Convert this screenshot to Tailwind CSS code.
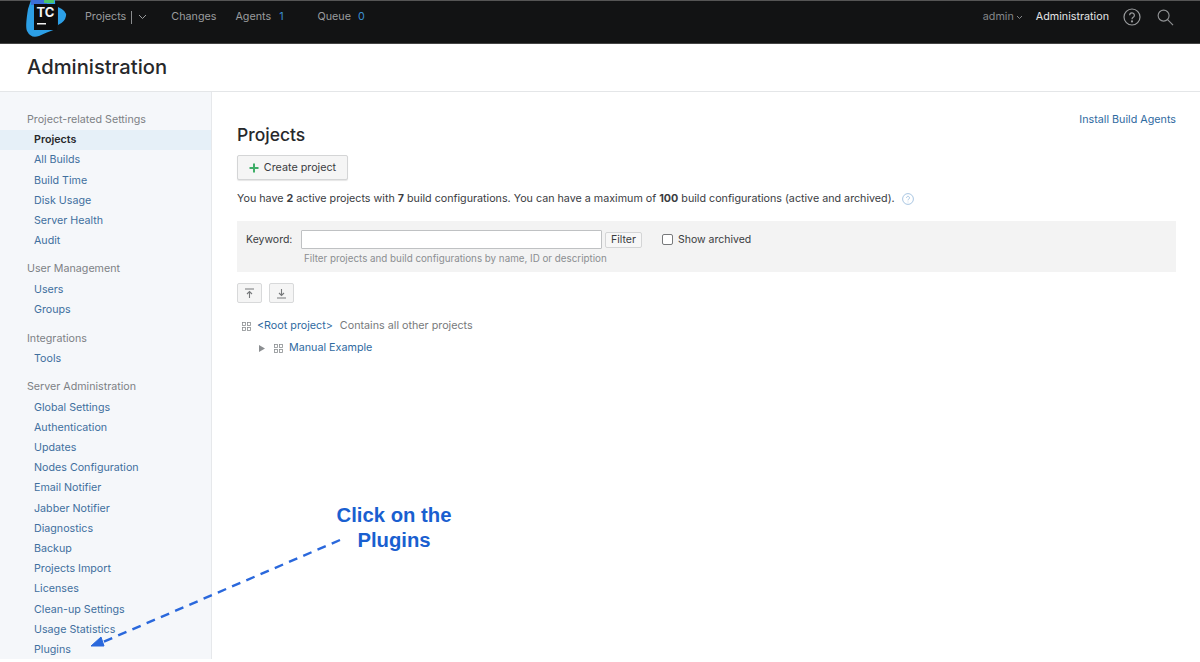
<!DOCTYPE html>
<html lang="en">
<head>
  <meta charset="UTF-8">
  <title>Administration</title>
  <script src="https://cdn.jsdelivr.net/npm/@tailwindcss/browser@4"></script>
</head>
<body class="relative w-[1200px] h-[662px] overflow-hidden bg-white font-['Inter',sans-serif] text-[10.75px] text-[#3a3c3f]">

  <!-- Top nav -->
  <header class="relative h-[44px] bg-[#121314] border-t border-t-[#555] border-b border-b-[#444] flex items-center pb-[10px] text-[#9a9c9e]">
    <svg class="absolute left-[25px] top-[-2px]" width="43" height="40" viewBox="0 0 43 40">
      <path d="M3 10 L6 1 L30 1 L31 30 Q20 34 14 37 Q6 40 2 32 Q0 28 3 10Z" fill="#2c9fe6"/>
      <path d="M6 1 L22 1 L22 6 L6 6Z" fill="#3b6fd8"/>
      <rect x="19" y="-2" width="10" height="6" fill="#4cc46a"/>
      <path d="M33 8 Q42 12 41 17 Q40 23 33 26Z" fill="#2c9fe6"/>
      <rect x="9" y="5" width="23" height="26" fill="#0d0d0e"/>
      <rect x="12" y="24" width="9" height="1.5" fill="#f0f0f0"/>
      <text x="11.5" y="18" font-family="Inter, sans-serif" font-size="13" font-weight="700" fill="#f4f4f4">TC</text>
    </svg>
    <nav class="flex items-center ml-[85px]">
      <span>Projects</span>
      <span class="w-px h-[13px] bg-[#8a8c8e] ml-[5px]"></span>
      <svg class="ml-[6px]" width="9" height="6" viewBox="0 0 9 6"><path d="M1 1l3.5 3.5L8 1" fill="none" stroke="#9a9c9e" stroke-width="1"/></svg>
      <span class="ml-[24px]">Changes</span>
      <span class="ml-[19px]">Agents</span>
      <span class="ml-[8px] text-[#3b8fd0]">1</span>
      <span class="ml-[34px]">Queue</span>
      <span class="ml-[7px] text-[#3b8fd0]">0</span>
    </nav>
    <div class="ml-auto flex items-center mr-[26px]">
      <span class="text-[#85878a]">admin</span>
      <svg class="ml-[2px]" width="7" height="5" viewBox="0 0 7 5"><path d="M1 1l2.5 2.5L6 1" fill="none" stroke="#85878a" stroke-width="1"/></svg>
      <span class="ml-[13px] text-[#e4e5e6]">Administration</span>
      <svg class="ml-[14px]" width="18" height="18" viewBox="0 0 18 18" fill="none" stroke="#9a9c9e" stroke-width="1.2">
        <circle cx="9" cy="9" r="8"/>
        <path d="M6.6 7.2a2.4 2.4 0 1 1 3.6 2.1c-.8.5-1.2.9-1.2 1.9"/>
        <circle cx="9" cy="13.4" r=".5" fill="#9a9c9e"/>
      </svg>
      <svg class="ml-[16px]" width="17" height="17" viewBox="0 0 18 18" fill="none" stroke="#8f9193" stroke-width="1.2">
        <circle cx="7" cy="7" r="5.8"/>
        <path d="M11.2 11.2L17 17"/>
      </svg>
    </div>
  </header>

  <!-- Title bar -->
  <div class="h-[48px] border-b border-[#e4e6e8] pl-[27px] flex items-center">
    <h1 class="text-[20.2px] font-medium text-[#27282b]">Administration</h1>
  </div>

  <div class="flex h-[567px]">
    <!-- Sidebar -->
    <aside class="w-[212px] shrink-0 bg-[#f5f7fa] border-r border-[#e6e8eb] pt-[18px] text-[10.7px] text-[#3f6f9e] leading-[20.2px]">
      <div class="pl-[27px] text-[#7d8185]">Project-related Settings</div>
      <div class="pl-[34px] bg-[#e6f0f8] font-semibold text-[#27282b]">Projects</div>
      <div class="pl-[34px]">All Builds</div>
      <div class="pl-[34px]">Build Time</div>
      <div class="pl-[34px]">Disk Usage</div>
      <div class="pl-[34px]">Server Health</div>
      <div class="pl-[34px]">Audit</div>
      <div class="pl-[27px] mt-[8px] text-[#7d8185]">User Management</div>
      <div class="pl-[34px]">Users</div>
      <div class="pl-[34px]">Groups</div>
      <div class="pl-[27px] mt-[9px] text-[#7d8185]">Integrations</div>
      <div class="pl-[34px]">Tools</div>
      <div class="pl-[27px] mt-[8px] text-[#7d8185]">Server Administration</div>
      <div class="pl-[34px]">Global Settings</div>
      <div class="pl-[34px]">Authentication</div>
      <div class="pl-[34px]">Updates</div>
      <div class="pl-[34px]">Nodes Configuration</div>
      <div class="pl-[34px]">Email Notifier</div>
      <div class="pl-[34px]">Jabber Notifier</div>
      <div class="pl-[34px]">Diagnostics</div>
      <div class="pl-[34px]">Backup</div>
      <div class="pl-[34px]">Projects Import</div>
      <div class="pl-[34px]">Licenses</div>
      <div class="pl-[34px]">Clean-up Settings</div>
      <div class="pl-[34px]">Usage Statistics</div>
      <div class="pl-[34px]">Plugins</div>
    </aside>

    <!-- Main -->
    <main class="relative flex-1 pl-[25px] pr-[24px] pt-[32px]">
      <a class="absolute right-[24px] top-[20px] text-[#2f6a9f]">Install Build Agents</a>
      <h2 class="text-[17.5px] font-medium leading-[22px] text-[#27282b]">Projects</h2>

      <button class="mt-[9px] h-[25px] w-[111px] flex items-center justify-center gap-[5px] pt-[1px] bg-[#f5f5f5] border border-[#d4d5d6] rounded-[2px] shadow-[0_1px_1px_rgba(0,0,0,0.1)]">
        <svg width="10" height="10" viewBox="0 0 10 10"><path d="M5 .5v9M.5 5h9" stroke="#3fae68" stroke-width="2"/></svg>
        <span>Create project</span>
      </button>

      <p class="mt-[11px] leading-[16px] text-[10.72px] flex items-center">
        <span>You have <b class="font-bold">2</b> active projects with <b class="font-bold">7</b> build configurations. You can have a maximum of <b class="font-bold">100</b> build configurations (active and archived).</span>
        <svg class="ml-[7px]" width="12" height="12" viewBox="0 0 12 12" fill="none" stroke="#a9c6e2" stroke-width="1">
          <circle cx="6" cy="6" r="5.4"/>
          <path d="M4.5 4.8a1.5 1.5 0 1 1 2.3 1.3c-.5.3-.8.6-.8 1.2M6 8.7v.6"/>
        </svg>
      </p>

      <!-- Filter -->
      <div class="mt-[14px] h-[51px] bg-[#f3f3f3] pl-[9px] pt-[9px]">
        <div class="flex items-center h-[19px]">
          <label class="w-[55px] text-[10.5px] pt-[1px]">Keyword:</label>
          <div class="w-[301px] h-[19px] bg-white border border-[#bfc1c3] rounded-[1px]"></div>
          <button class="ml-[3px] w-[37px] h-[16px] flex items-center justify-center bg-[#f7f7f7] border border-[#d4d5d6] rounded-[2px] text-[10.5px]">Filter</button>
          <span class="ml-[20px] w-[11px] h-[11px] bg-white border border-[#77797b] rounded-[2px]"></span>
          <span class="ml-[5px] text-[10.5px] pt-[1px]">Show archived</span>
        </div>
        <div class="ml-[58px] mt-[3px] text-[9.8px] leading-[14px] text-[#8b8e91]">Filter projects and build configurations by name, ID or description</div>
      </div>

      <!-- Collapse / expand buttons -->
      <div class="mt-[11px] flex gap-[7px]">
        <button class="w-[25px] h-[20px] flex items-center justify-center bg-[#f5f5f5] border border-[#d8d9da] rounded-[2px]">
          <svg width="11" height="11" viewBox="0 0 11 11" fill="none" stroke="#77797b" stroke-width="1.1"><path d="M1 1h9M5.5 10V3.5M3 6l2.5-2.5L8 6"/></svg>
        </button>
        <button class="w-[25px] h-[20px] flex items-center justify-center bg-[#f5f5f5] border border-[#d8d9da] rounded-[2px]">
          <svg width="11" height="11" viewBox="0 0 11 11" fill="none" stroke="#77797b" stroke-width="1.1"><path d="M1 10h9M5.5 1v6.5M3 5l2.5 2.5L8 5"/></svg>
        </button>
      </div>

      <!-- Tree -->
      <div class="mt-[13px] ml-[5px] flex items-center leading-[20px]">
        <svg width="9" height="9" viewBox="0 0 9 9" fill="none" stroke="#8b8e91" stroke-width=".8"><rect x=".5" y=".5" width="3" height="3"/><rect x="5.5" y=".5" width="3" height="3"/><rect x=".5" y="5.5" width="3" height="3"/><rect x="5.5" y="5.5" width="3" height="3"/></svg>
        <a class="ml-[6px] text-[#2f6a9f]">&lt;Root project&gt;</a>
        <span class="ml-[7px] text-[#77797b]">Contains all other projects</span>
      </div>
      <div class="mt-[2px] ml-[22px] flex items-center leading-[20px]">
        <svg width="6" height="7" viewBox="0 0 6 7"><path d="M0 0l6 3.5L0 7z" fill="#8b8e91"/></svg>
        <svg class="ml-[9px]" width="9" height="9" viewBox="0 0 9 9" fill="none" stroke="#8b8e91" stroke-width=".8"><rect x=".5" y=".5" width="3" height="3"/><rect x="5.5" y=".5" width="3" height="3"/><rect x=".5" y="5.5" width="3" height="3"/><rect x="5.5" y="5.5" width="3" height="3"/></svg>
        <a class="ml-[6px] text-[#2f6a9f]">Manual Example</a>
      </div>
    </main>
  </div>

  <!-- Annotation -->
  <div class="absolute left-[314px] top-[503px] w-[160px] text-center font-['Liberation_Sans',sans-serif] font-bold text-[20.3px] leading-[25px] text-[#1a5fd0]">Click on the<br>Plugins</div>
  <svg class="absolute left-0 top-0 pointer-events-none" width="1200" height="662" viewBox="0 0 1200 662">
    <path d="M340 540 L103 642" fill="none" stroke="#2a68dc" stroke-width="2.4" stroke-dasharray="9 6.5"/>
    <path d="M91 646 L101 637 L104 646Z" fill="#2a68dc" stroke="#2a68dc" stroke-width="1"/>
  </svg>
</body>
</html>
